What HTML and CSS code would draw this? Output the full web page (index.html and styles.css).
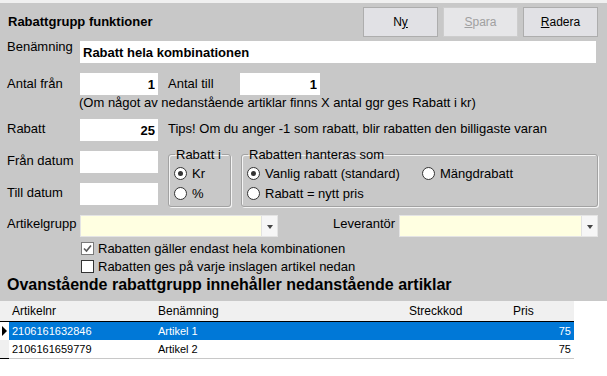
FILE: index.html
```html
<!DOCTYPE html>
<html lang="sv">

<head>
    <meta charset="UTF-8">
    <meta name="viewport" content="width=device-width, initial-scale=1.0">
    <title>Rabattgrupp</title>
    <link rel="stylesheet" href="styles.css">
</head>

<body>
    <div class="panel">
        <div class="top">
            <h1 class="title">Rabattgrupp funktioner</h1>
            <div class="buttons">
                <button class="btn">N<u>y</u></button>
                <button class="btn" disabled><u>S</u>para</button>
                <button class="btn"><u>R</u>adera</button>
            </div>
        </div>

        <div class="row row-name">
            <label class="lbl" for="name">Benämning</label>
            <input class="inp inp-name" type="text" id="name" value="Rabatt hela kombinationen">
        </div>

        <div class="row row-antal">
            <label class="lbl" for="fran">Antal från</label>
            <input class="inp inp-num" type="text" id="fran" value="1">
            <label class="lbl lbl-till" for="till">Antal till</label>
            <input class="inp inp-num inp-till" type="text" id="till" value="1">
        </div>
        <p class="note">(Om något av nedanstående artiklar finns X antal ggr ges Rabatt i kr)</p>

        <div class="row row-rabatt">
            <label class="lbl" for="rabatt">Rabatt</label>
            <input class="inp inp-num" type="text" id="rabatt" value="25">
            <span class="tips">Tips! Om du anger -1 som rabatt, blir rabatten den billigaste varan</span>
        </div>

        <div class="row row-dates">
            <div class="dates">
                <div class="row">
                    <label class="lbl" for="fdat">Från datum</label>
                    <input class="inp inp-num" type="text" id="fdat">
                </div>
                <div class="row row-tdat">
                    <label class="lbl" for="tdat">Till datum</label>
                    <input class="inp inp-num" type="text" id="tdat">
                </div>
            </div>

            <fieldset class="group group-typ">
                <legend>Rabatt i</legend>
                <div class="opt"><span class="radio checked"></span>Kr</div>
                <div class="opt"><span class="radio"></span>%</div>
            </fieldset>

            <fieldset class="group group-hant">
                <legend>Rabatten hanteras som</legend>
                <div class="opts">
                    <div class="opt opt-wide"><span class="radio checked"></span>Vanlig rabatt (standard)</div>
                    <div class="opt"><span class="radio"></span>Mängdrabatt</div>
                </div>
                <div class="opt"><span class="radio"></span>Rabatt = nytt pris</div>
            </fieldset>
        </div>

        <div class="row row-combo">
            <label class="lbl">Artikelgrupp</label>
            <div class="combo">
                <span class="combo-text"></span>
                <span class="combo-btn"><span class="caret"></span></span>
            </div>
            <label class="lbl lbl-lev">Leverantör</label>
            <div class="combo combo-lev">
                <span class="combo-text"></span>
                <span class="combo-btn"><span class="caret"></span></span>
            </div>
        </div>

        <div class="checks">
            <div class="check">
                <span class="box box-on">
                    <svg width="11" height="11" viewBox="0 0 11 11"><polyline points="2,5.5 4.5,8 9,2.5" fill="none" stroke="#5a5a5a" stroke-width="1.6"/></svg>
                </span>
                Rabatten gäller endast hela kombinationen
            </div>
            <div class="check">
                <span class="box"></span>
                Rabatten ges på varje inslagen artikel nedan
            </div>
        </div>

        <h2 class="heading">Ovanstående rabattgrupp innehåller nedanstående artiklar</h2>
    </div>

    <table class="grid">
        <colgroup>
            <col style="width: 9px">
            <col style="width: 146px">
            <col style="width: 251px">
            <col style="width: 104px">
            <col style="width: 64px">
        </colgroup>
        <thead>
            <tr>
                <th class="ind"></th>
                <th>Artikelnr</th>
                <th>Benämning</th>
                <th>Streckkod</th>
                <th>Pris</th>
            </tr>
        </thead>
        <tbody>
            <tr class="sel">
                <td class="ind"><span class="arrow"></span></td>
                <td>2106161632846</td>
                <td>Artikel 1</td>
                <td></td>
                <td class="num">75</td>
            </tr>
            <tr class="last">
                <td class="ind"></td>
                <td>2106161659779</td>
                <td>Artikel 2</td>
                <td></td>
                <td class="num">75</td>
            </tr>
        </tbody>
    </table>
</body>

</html>
```

FILE: styles.css
```css
* {
    box-sizing: border-box;
}

body {
    margin: 0;
    width: 607px;
    height: 376px;
    overflow: hidden;
    background-color: #fff;
    font-family: "Liberation Sans", Arial, sans-serif;
    font-size: 13px;
    color: #000;
}

.panel {
    background-color: #c8c8c8;
    border-top: 3px solid #f0f0f0;
    padding: 0 9px 7px 7px;
}

/* top bar */

.top {
    display: flex;
    justify-content: space-between;
    height: 30px;
    margin-top: 4px;
}

.title {
    margin: 6.5px 0 0 1px;
    font-size: 13px;
    line-height: 15px;
    font-weight: bold;
}

.buttons {
    display: flex;
    gap: 5px;
}

.btn {
    width: 75px;
    height: 30px;
    padding: 0;
    background-color: #e1e1e5;
    border: 1px solid #adadad;
    font-family: "Liberation Sans", Arial, sans-serif;
    font-size: 12px;
    color: #000;
}

.btn:disabled {
    background-color: #e6e6e8;
    border-color: #cdcdcd;
    color: #a0a0a0;
}

/* form rows */

.row {
    display: flex;
    align-items: flex-start;
}

.lbl {
    flex: none;
    width: 73px;
    line-height: 15px;
}

.inp {
    flex: none;
    width: 78px;
    height: 22px;
    padding: 0 3px;
    border: none;
    outline: none;
    background-color: #fff;
    font-family: "Liberation Sans", Arial, sans-serif;
    font-size: 13px;
    font-weight: bold;
    color: #000;
}

.inp-num {
    text-align: right;
}

.row-name {
    margin-top: 4px;
}

.row-name .lbl {
    margin-top: -2.5px;
}

.inp-name {
    width: 516px;
    height: 22px;
    padding-left: 3px;
}

.row-antal {
    margin-top: 10px;
}

.row-antal .lbl {
    margin-top: 2.5px;
}

.lbl-till {
    width: 72px;
    margin-left: 10px;
}

.inp-till {
    width: 80px;
}

.note {
    margin: 0 0 0 72px;
    line-height: 15px;
}

.row-rabatt {
    margin-top: 9px;
}

.row-rabatt .lbl,
.tips {
    margin-top: 1.5px;
    line-height: 15px;
}

.tips {
    margin-left: 10px;
}

/* dates and option groups */

.row-dates {
    margin-top: 6px;
}

.dates {
    padding-top: 4px;
}

.dates .lbl {
    margin-top: 1.5px;
}

.row-tdat {
    margin-top: 10px;
}

.group {
    margin: 0 0 0 10px;
    padding: 1px 5px 3px 5px;
    border: 1px solid #a2a2a2;
    border-radius: 3px;
    box-shadow: inset 1px 1px 0 #f4f4f4, 1px 1px 0 #f4f4f4;
}

.group legend {
    padding: 0 1px;
    margin-left: 1px;
    line-height: 15px;
}

.group-typ {
    width: 63px;
}

.group-hant {
    width: 357px;
}

.opts {
    display: flex;
}

.opt {
    display: flex;
    align-items: center;
    gap: 5px;
    height: 20px;
    white-space: nowrap;
}

.opt-wide {
    width: 175px;
}

.radio {
    position: relative;
    flex: none;
    width: 13px;
    height: 13px;
    border: 1px solid #333;
    border-radius: 50%;
    background-color: #fff;
}

.radio.checked::after {
    content: "";
    position: absolute;
    left: 3px;
    top: 3px;
    width: 5px;
    height: 5px;
    border-radius: 50%;
    background-color: #333;
}

/* combos */

.row-combo {
    margin-top: 8px;
}

.row-combo .lbl {
    margin-top: 0.5px;
}

.combo {
    display: flex;
    width: 198px;
    height: 22px;
    background-color: #ffffe1;
    border: 1px solid #e4e4e4;
}

.combo-text {
    flex: 1;
}

.combo-btn {
    display: flex;
    align-items: center;
    justify-content: center;
    width: 16px;
    background-color: #f6f6f6;
    border-left: 1px solid #e2e2e2;
}

.caret {
    width: 0;
    height: 0;
    margin-top: 2px;
    border-left: 3.5px solid transparent;
    border-right: 3.5px solid transparent;
    border-top: 4px solid #444;
}

.lbl-lev {
    width: 66px;
    margin-left: 55px;
}

.combo-lev {
    width: 199px;
}

/* checkboxes */

.checks {
    margin: 2px 0 0 74px;
}

.check {
    display: flex;
    align-items: center;
    gap: 4px;
    height: 18px;
    line-height: 15px;
}

.box {
    display: flex;
    align-items: center;
    justify-content: center;
    flex: none;
    width: 13px;
    height: 13px;
    border: 1px solid #333;
    background-color: #fff;
}

.box-on {
    border-color: #7a7a7a;
}

.heading {
    margin: 1px 0 0 0;
    font-size: 16px;
    line-height: 18px;
    font-weight: bold;
}

/* article grid */

.grid {
    width: 574px;
    table-layout: fixed;
    border-collapse: separate;
    border-spacing: 0;
}

.grid th {
    padding: 3px 3px 2px 3px;
    line-height: 15px;
    background-color: #f0f0f0;
    border-bottom: 1px solid #000;
    font-size: 12px;
    font-weight: normal;
    text-align: left;
    white-space: nowrap;
}

.grid td {
    padding: 0 3px;
    line-height: 18px;
    font-size: 11px;
    white-space: nowrap;
}

.grid .ind {
    padding: 0;
    background-color: #f0f0f0;
}

.grid .num {
    text-align: right;
}

.grid tr.sel td {
    background-color: #0078d7;
    color: #fff;
}

.grid tr.sel td.ind {
    background-color: #fff;
}

.grid tr.last td {
    border-bottom: 1px solid #c8c8c8;
}

.grid tr.last td.ind {
    border-bottom-color: #000;
}

.arrow {
    display: block;
    width: 0;
    height: 0;
    margin-left: 2px;
    border-top: 5px solid transparent;
    border-bottom: 5px solid transparent;
    border-left: 5px solid #000;
}
```
